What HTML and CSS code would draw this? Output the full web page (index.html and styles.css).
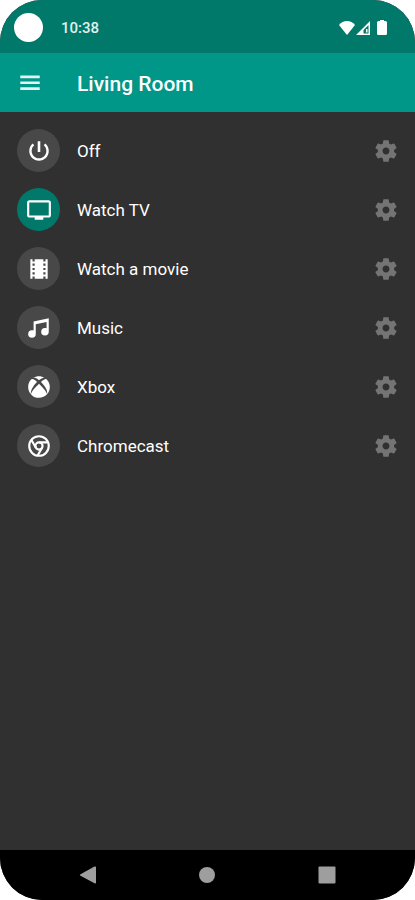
FILE: index.html
```html
<!DOCTYPE html>
<html lang="en">
<head>
    <meta charset="UTF-8">
    <meta name="viewport" content="width=device-width, initial-scale=1.0">
    <title>Living Room</title>
    <link rel="stylesheet" href="styles.css">
</head>
<body>
    <!-- Shared icons -->
    <svg class="defs" aria-hidden="true">
        <symbol id="gear" viewBox="0 0 24 24">
            <path d="M19.43 12.98c.04-.32.07-.64.07-.98s-.03-.66-.07-.98l2.11-1.65c.19-.15.24-.42.12-.64l-2-3.46c-.12-.22-.39-.3-.61-.22l-2.49 1c-.52-.4-1.08-.73-1.69-.98l-.38-2.65C14.46 2.18 14.25 2 14 2h-4c-.25 0-.46.18-.49.42l-.38 2.65c-.61.25-1.17.59-1.69.98l-2.49-1c-.23-.09-.49 0-.61.22l-2 3.46c-.13.22-.07.49.12.64l2.11 1.65c-.04.32-.07.65-.07.98s.03.66.07.98l-2.11 1.65c-.19.15-.24.42-.12.64l2 3.46c.12.22.39.3.61.22l2.49-1c.52.4 1.08.73 1.69.98l.38 2.65c.03.24.24.42.49.42h4c.25 0 .46-.18.49-.42l.38-2.65c.61-.25 1.17-.59 1.69-.98l2.49 1c.23.09.49 0 .61-.22l2-3.46c.12-.22.07-.49-.12-.64l-2.11-1.65zM12 15.2c-1.770 0-3.200-1.430-3.200-3.200s1.430-3.200 3.200-3.200 3.200 1.430 3.200 3.200-1.430 3.200-3.200 3.200z"/>
        </symbol>
    </svg>

    <div class="phone">
        <div class="status-bar">
            <span class="camera"></span>
            <span class="clock">10:38</span>
            <div class="status-icons">
                <svg class="wifi" viewBox="0 0 16 14"><path d="M8 14L0 4C2 1.500 5 0 8 0s6 1.500 8 4z"/></svg>
                <svg class="signal" viewBox="0 0 14 14"><path fill-rule="evenodd" d="M14 0v14H0zM12.500 4L7.500 9v3.500h5zM10 8h1.500v3.500H10z"/></svg>
                <svg class="battery" viewBox="0 0 10 15"><path d="M3 0h4v1h1.500Q10 1 10 2.500v11Q10 15 8.500 15h-7Q0 15 0 13.500v-11Q0 1 1.500 1H3z"/></svg>
            </div>
        </div>

        <header class="app-bar">
            <button class="menu-btn" type="button" aria-label="Open menu">
                <svg class="icon" viewBox="0 0 24 24"><path d="M3 18.500h18V16H3v2.500zM3 13h18v-2.500H3V13zM3 5v2.500h18V5H3z"/></svg>
            </button>
            <h1>Living Room</h1>
        </header>

        <main>
            <ul class="activities">
                <li>
                    <button class="activity" type="button">
                        <span class="badge"><svg class="icon" viewBox="0 0 24 24"><path d="M13.200 3h-2.400v10h2.400V3zm4.630 2.170l-1.420 1.420C17.990 7.860 18.800 9.810 18.800 12c0 3.760-3.040 6.800-6.800 6.800s-6.800-3.040-6.800-6.800c0-2.190.81-4.140 2.380-5.420L6.170 5.170C4.230 6.820 3 9.260 3 12c0 4.970 4.030 9 9 9s9-4.030 9-9c0-2.740-1.230-5.180-3.170-6.830z"/></svg></span>
                        Off
                    </button>
                    <button class="settings" type="button" aria-label="Off settings"><svg class="icon"><use href="#gear"/></svg></button>
                </li>
                <li>
                    <button class="activity active" type="button">
                        <span class="badge"><svg class="icon" viewBox="0 0 24 24"><path d="M21 3H3c-1.100 0-2 .9-2 2v12c0 1.100.9 2 2 2h5v2h8v-2h5c1.100 0 2-.9 2-2V5c0-1.100-.9-2-2-2zm0 14H3V5h18v12z"/></svg></span>
                        Watch TV
                    </button>
                    <button class="settings" type="button" aria-label="Watch TV settings"><svg class="icon"><use href="#gear"/></svg></button>
                </li>
                <li>
                    <button class="activity" type="button">
                        <span class="badge"><svg class="icon" viewBox="0 0 24 24"><path d="M18 3v2h-2V3H8v2H6V3H4v18h2v-2h2v2h8v-2h2v2h2V3h-2zM8 17H6v-2h2v2zm0-4H6v-2h2v2zm0-4H6V7h2v2zm10 8h-2v-2h2v2zm0-4h-2v-2h2v2zm0-4h-2V7h2v2z"/></svg></span>
                        Watch a movie
                    </button>
                    <button class="settings" type="button" aria-label="Watch a movie settings"><svg class="icon"><use href="#gear"/></svg></button>
                </li>
                <li>
                    <button class="activity" type="button">
                        <span class="badge"><svg class="icon" viewBox="0 0 24 24"><path d="M21,3V15.500A3.500,3.500 0 0,1 17.500,19A3.500,3.500 0 0,1 14,15.500A3.500,3.500 0 0,1 17.500,12C18.040,12 18.550,12.120 19,12.340V6.470L9,8.600V17.500A3.500,3.500 0 0,1 5.500,21A3.500,3.500 0 0,1 2,17.500A3.500,3.500 0 0,1 5.500,14C6.040,14 6.550,14.120 7,14.340V6L21,3Z"/></svg></span>
                        Music
                    </button>
                    <button class="settings" type="button" aria-label="Music settings"><svg class="icon"><use href="#gear"/></svg></button>
                </li>
                <li>
                    <button class="activity" type="button">
                        <span class="badge"><svg class="icon" viewBox="0 0 24 24"><path d="M6.430,3.720C6.500,3.660 6.570,3.600 6.620,3.560C8.180,2.550 10,2 12,2C13.880,2 15.640,2.500 17.140,3.420C17.250,3.500 17.540,3.690 17.700,3.880C16.250,2.280 12,5.700 12,5.700C10.500,4.570 9.170,3.800 8.160,3.500C7.310,3.290 6.730,3.500 6.460,3.700M19.340,5.210C19.290,5.160 19.240,5.110 19.200,5.060C18.840,4.660 18.380,4.560 18,4.590C17.610,4.710 15.900,5.320 13.800,7.310C13.800,7.310 16.170,9.610 17.620,11.960C19.070,14.310 19.930,16.160 19.400,18.730C21,16.950 22,14.590 22,12C22,9.380 21,7 19.340,5.210M15.730,12.960C15.080,12.240 14.130,11.210 12.860,9.950C12.590,9.680 12.300,9.400 12,9.100C12,9.100 11.530,9.560 10.930,10.170C10.160,10.940 9.170,11.950 8.610,12.540C7.630,13.590 4.810,16.890 4.650,18.740C4.650,18.740 4,17.280 5.400,13.890C6.300,11.680 9,8.360 10.150,7.280C10.150,7.280 9.120,6.140 7.820,5.350L7.770,5.320C7.140,4.950 6.460,4.660 5.800,4.620C5.130,4.670 4.710,5.160 4.710,5.160C3.030,6.950 2,9.350 2,12A10,10 0 0,0 12,22C14.930,22 17.570,20.740 19.400,18.730C19.400,18.730 19.190,17.400 17.840,15.500C17.530,15.070 16.370,13.690 15.730,12.960Z"/></svg></span>
                        Xbox
                    </button>
                    <button class="settings" type="button" aria-label="Xbox settings"><svg class="icon"><use href="#gear"/></svg></button>
                </li>
                <li>
                    <button class="activity" type="button">
                        <span class="badge">
                            <svg class="icon outline" viewBox="0 0 24 24">
                                <circle cx="12" cy="12" r="9"/>
                                <circle cx="12" cy="12" r="3.300"/>
                                <path d="M12 8.700h8M9.140 13.650l-4-6.930M14.860 13.650l-4 6.930"/>
                            </svg>
                        </span>
                        Chromecast
                    </button>
                    <button class="settings" type="button" aria-label="Chromecast settings"><svg class="icon"><use href="#gear"/></svg></button>
                </li>
            </ul>
        </main>

        <nav class="nav-bar">
            <button type="button" aria-label="Back"><svg viewBox="0 0 18 18"><path d="M1.500 8.200L15.500 .6Q17 0 17 1.500v15Q17 18 15.500 17.300L1.500 9.800Q0 9 1.500 8.200z"/></svg></button>
            <button type="button" aria-label="Home"><svg viewBox="0 0 18 18"><circle cx="9" cy="9" r="8"/></svg></button>
            <button type="button" aria-label="Recent apps"><svg viewBox="0 0 18 18"><rect x=".5" y=".5" width="17" height="17" rx="1"/></svg></button>
        </nav>
    </div>
</body>
</html>
```

FILE: styles.css
```css
* {
    box-sizing: border-box;
}
body {
    font-family: Roboto, "Liberation Sans", sans-serif;
    background-color: #fff;
    color: #fff;
    margin: 0;
}
button {
    background: none;
    border: none;
    padding: 0;
    margin: 0;
    color: inherit;
    font: inherit;
    cursor: pointer;
}
svg {
    display: block;
    fill: currentColor;
}
.defs {
    display: none;
}
.icon {
    width: 26px;
    height: 26px;
}
.outline {
    fill: none;
    stroke: currentColor;
    stroke-width: 2;
}
.phone {
    display: flex;
    flex-direction: column;
    min-height: 100vh;
    background-color: #303030;
    border-radius: 42px;
    overflow: hidden;
}

/* Status bar */
.status-bar {
    display: flex;
    align-items: center;
    height: 53px;
    padding: 2px 28px 0 14px;
    background-color: #00796b;
}
.camera {
    width: 29px;
    height: 29px;
    border-radius: 50%;
    background-color: #fff;
}
.clock {
    margin-left: 18px;
    font-size: 15px;
    font-weight: 500;
    color: #e0f0ee;
}
.status-icons {
    display: flex;
    align-items: center;
    margin-left: auto;
}
.wifi {
    width: 16px;
    height: 14px;
}
.signal {
    width: 14px;
    height: 14px;
    margin-left: 1px;
}
.battery {
    width: 10px;
    height: 15px;
    margin-left: 7px;
}

/* App bar */
.app-bar {
    display: flex;
    align-items: center;
    height: 59px;
    padding-left: 17px;
    background-color: #009688;
}
.menu-btn {
    color: #e0f2f1;
}
.app-bar h1 {
    margin: 0 0 0 34px;
    padding-top: 2px;
    font-size: 21px;
    font-weight: 500;
}

/* Activities */
main {
    flex: 1;
}
.activities {
    list-style: none;
    margin: 0;
    padding: 9px 16px 9px 17px;
}
.activities li {
    display: flex;
    align-items: center;
    height: 59px;
}
.activity {
    display: flex;
    flex: 1;
    align-items: center;
    gap: 17px;
    font-size: 17px;
    text-align: left;
}
.badge {
    display: flex;
    align-items: center;
    justify-content: center;
    width: 43px;
    height: 43px;
    border-radius: 50%;
    background-color: #484848;
}
.active .badge {
    background-color: #00796b;
}
.settings {
    color: #747474;
}

/* Navigation bar */
.nav-bar {
    display: grid;
    grid-template-columns: repeat(3, 1fr);
    height: 50px;
    padding: 0 28px;
    background-color: #000;
    color: #9e9e9e;
}
.nav-bar button {
    display: flex;
    align-items: center;
    justify-content: center;
}
.nav-bar svg {
    width: 18px;
    height: 18px;
}
```
